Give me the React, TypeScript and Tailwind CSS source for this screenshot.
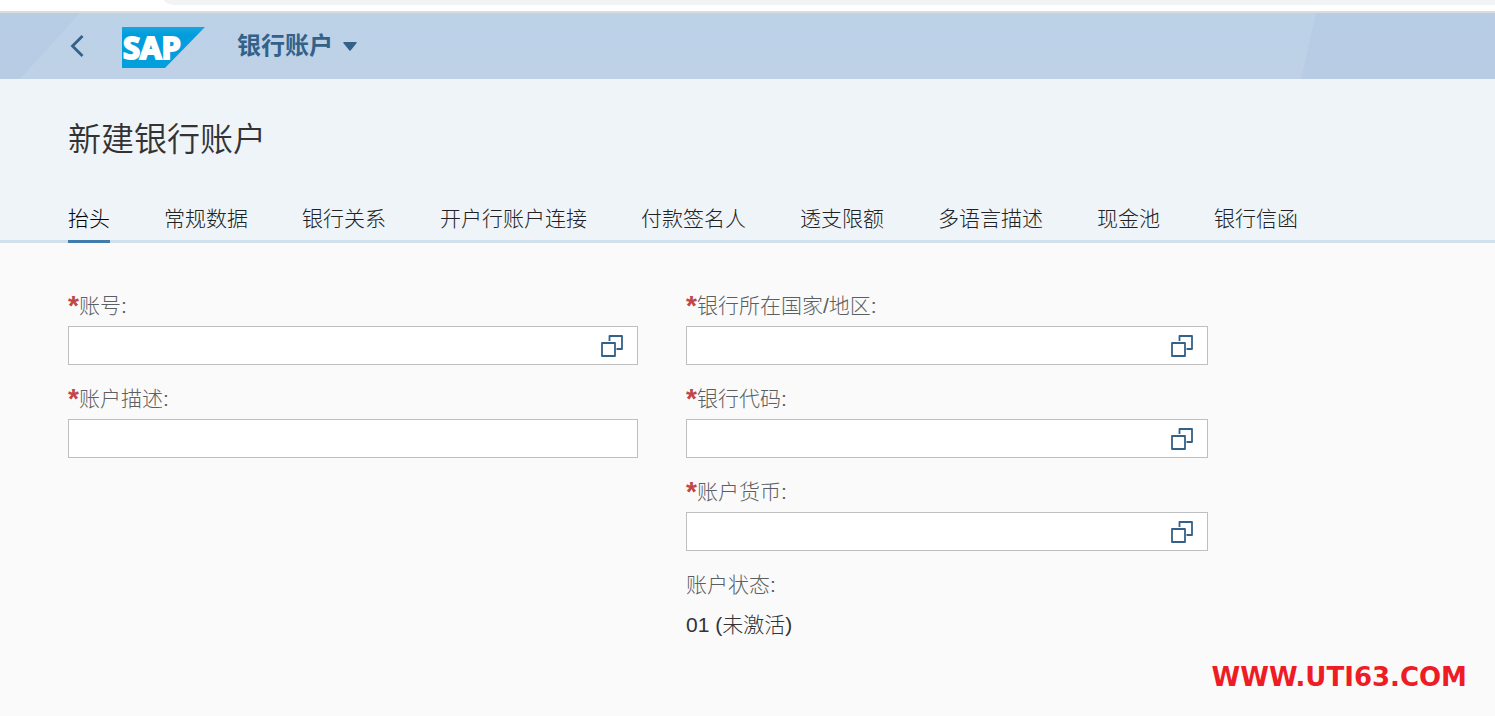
import { useState } from 'react';

const TABS = ['抬头', '常规数据', '银行关系', '开户行账户连接', '付款签名人', '透支限额', '多语言描述', '现金池', '银行信函'];

interface FieldProps {
  id: string;
  label: string;
  valueHelp?: boolean;
}

function SapLogo() {
  return (
    <svg width="83" height="41" viewBox="0 0 83 41" className="overflow-visible" role="img" aria-label="SAP">
      <defs>
        <linearGradient id="sap-blue" x1="0" y1="0" x2="0" y2="1">
          <stop offset="0" stopColor="#1aa5df" />
          <stop offset="0.2" stopColor="#009ddc" />
          <stop offset="1" stopColor="#049fdd" />
        </linearGradient>
      </defs>
      <path d="M0 0H83L43 41H0Z" fill="url(#sap-blue)" />
      <text
        x="1"
        y="32"
        fill="#fff"
        stroke="#fff"
        strokeWidth="2"
        fontSize="31"
        fontWeight="700"
        fontFamily="'Noto Sans', 'Open Sans', sans-serif"
      >
        SAP
      </text>
    </svg>
  );
}

function ValueHelpIcon() {
  return (
    <svg width="22" height="22" viewBox="0 0 22 22" fill="none" stroke="#346187" strokeWidth="1.8" strokeLinejoin="round">
      <rect x="1" y="8" width="13" height="13" />
      <path d="M8.5 6V1H21V14H15.5" />
    </svg>
  );
}

function Field({ id, label, valueHelp }: FieldProps) {
  return (
    <div>
      <label htmlFor={id} className="flex h-8 items-center text-[21px] text-[#5c5f62]">
        <span className="h-8 text-[28px] leading-8 font-bold text-[#c14646]">*</span>
        {label}:
      </label>
      <div className="mt-1 flex h-[39px] border border-[#bfbfbf] bg-white">
        <input id={id} type="text" required className="min-w-0 flex-1 bg-transparent px-3 text-[21px] outline-none" />
        {valueHelp && (
          <button type="button" aria-label={`选择${label}`} className="flex w-[50px] items-center justify-center">
            <ValueHelpIcon />
          </button>
        )}
      </div>
    </div>
  );
}

export default function App() {
  const [activeTab, setActiveTab] = useState(TABS[0]);

  return (
    <div className="flex min-h-screen flex-col bg-[#fafafa] font-['Liberation_Sans','Noto_Sans_CJK_SC',sans-serif] font-light">
      {/* Bottom edge of the browser toolbar */}
      <div className="h-[13px] border-b-2 border-[#dcdcdc] bg-white pl-[164px]">
        <div className="h-[5px] rounded-bl-[12px_5px] bg-[#f1f3f4]" />
      </div>

      <header className="relative flex h-[66px] items-center bg-linear-to-b from-[#b7cde4] to-[#b8cce4]">
        <div className="absolute inset-0 bg-linear-to-b from-[#bbd2e7] to-[#bfd1e7] [clip-path:polygon(80px_0,calc(100%-179px)_0,calc(100%-194px)_100%,20px_100%)]" />
        <div className="relative flex items-center pl-[68px]">
          <button type="button" aria-label="返回" className="flex w-[54px] pl-[2px]">
            <svg width="14" height="22" viewBox="0 0 14 22" fill="none" stroke="#346187" strokeWidth="2.8">
              <path d="M12.5 1L2.5 11L12.5 21" />
            </svg>
          </button>
          <a href="#home" className="pt-[2px]">
            <SapLogo />
          </a>
          <button type="button" className="ml-8 flex items-center gap-[10px] text-2xl font-bold text-[#346187]">
            银行账户
            <svg width="14" height="9" viewBox="0 0 14 9" fill="#346187">
              <path d="M1 0H13Q14.5 0 13.5 1.2L7.6 8.5Q7 9.2 6.4 8.5L.5 1.2Q-.5 0 1 0Z" />
            </svg>
          </button>
        </div>
      </header>

      <div className="border-b-3 border-[#d1e0ee] bg-[#eff4f9] px-[68px]">
        <h1 className="pt-9 text-[33px] leading-[50px] font-[350] text-[#333]">新建银行账户</h1>
        <nav className="mt-8 -mb-[3px] flex gap-[54px]" role="tablist">
          {TABS.map((tab) => (
            <button
              key={tab}
              type="button"
              role="tab"
              aria-selected={tab === activeTab}
              onClick={() => setActiveTab(tab)}
              className={`h-[46px] border-b-3 text-[21px] whitespace-nowrap ${
                tab === activeTab ? 'border-[#427cac] text-black' : 'border-transparent text-[#222]'
              }`}
            >
              {tab}
            </button>
          ))}
        </nav>
      </div>

      <main className="grid max-w-[1276px] grid-cols-[570fr_522fr] gap-x-12 px-[68px] pt-[47px]">
        <div className="flex flex-col gap-[18px]">
          <Field id="account-number" label="账号" valueHelp />
          <Field id="account-description" label="账户描述" />
        </div>
        <div className="flex flex-col gap-[18px]">
          <Field id="bank-country" label="银行所在国家/地区" valueHelp />
          <Field id="bank-key" label="银行代码" valueHelp />
          <Field id="account-currency" label="账户货币" valueHelp />
          <div className="text-[21px]">
            <div className="flex h-8 items-center text-[#5c5f62]">账户状态:</div>
            <div className="mt-1 flex h-[39px] items-center text-[#333]">01 (未激活)</div>
          </div>
        </div>
      </main>

      <footer className="mt-auto pr-7 pb-5 text-right font-['DejaVu_Sans',sans-serif] text-[26px] leading-[38px] font-bold text-[#ee1c25]">
        WWW.UTI63.COM
      </footer>
    </div>
  );
}
